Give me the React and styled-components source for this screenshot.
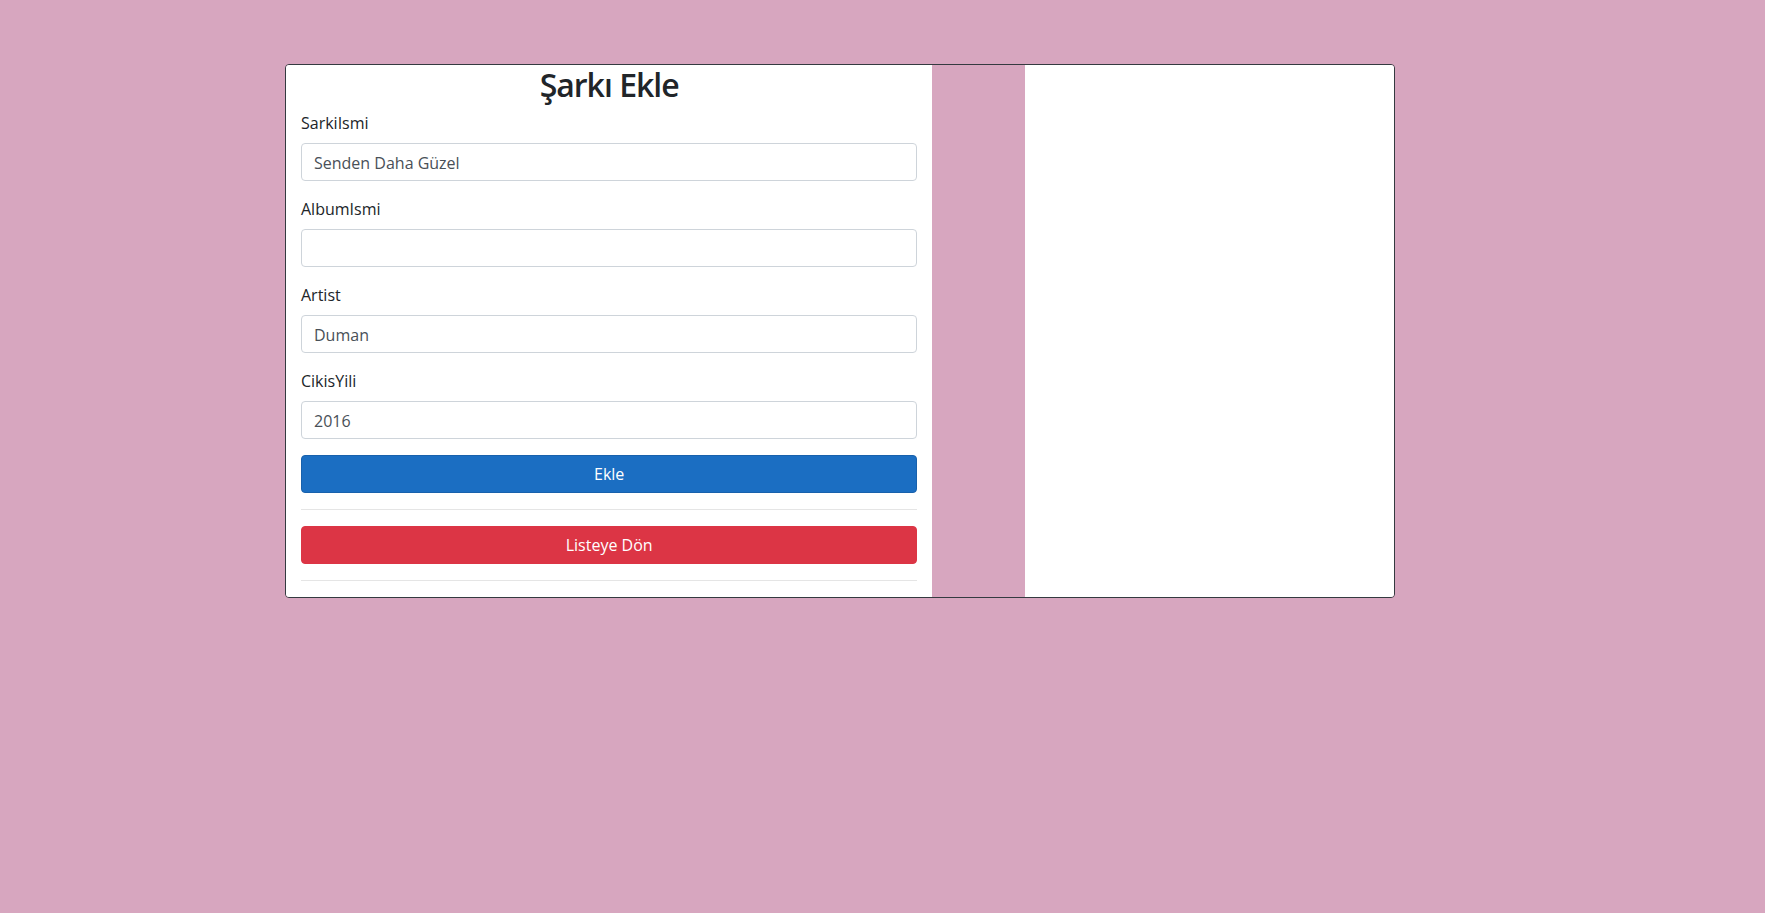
import styled, { createGlobalStyle } from 'styled-components'

const GlobalStyle = createGlobalStyle`
    html, body {
        margin: 0;
        padding: 0;
        background: #d7a6bf;
        min-height: 100vh;
    }

    body {
        font-family: "Open Sans", "Liberation Sans", sans-serif;
        font-size: 16px;
        line-height: 1.5;
        color: #212529;
    }

    * {
        box-sizing: border-box;
    }
`

const Page = styled.div`
    padding: 64px 0 0 285px;
`

const Card = styled.div`
    display: flex;
    width: 1110px;
    border: 1px solid #343a40;
    border-radius: 4px;
    overflow: hidden;
`

// bootstrap-ish 12 column split: 7 / 1 / 4
const Column = styled.div`
    flex: 0 0 ${p => (p.span / 12) * 100}%;
    max-width: ${p => (p.span / 12) * 100}%;
    background: ${p => (p.empty ? 'transparent' : '#fff')};
    padding: 0 15px;
`

const Title = styled.h2`
    margin: 0 0 8px;
    padding-top: 1px;
    font-size: 32px;
    font-weight: 600;
    letter-spacing: -1px;
    line-height: 37.4px;
    text-align: center;
`

const Group = styled.div`
    margin-bottom: 16px;
`

const Label = styled.label`
    display: inline-block;
    margin-bottom: 8px;
`

const Input = styled.input`
    display: block;
    width: 100%;
    height: 38px;
    padding: 7px 12px 5px;
    font: inherit;
    color: #495057;
    background: #fff;
    border: 1px solid #ced4da;
    border-radius: 4px;
    outline: none;
`

const Button = styled.button`
    display: block;
    width: 100%;
    height: 38px;
    padding: 6px 12px;
    font: inherit;
    color: #fff;
    background: ${p => p.bg};
    border: 1px solid ${p => p.border};
    border-radius: 4px;
    cursor: pointer;
`

const Rule = styled.hr`
    margin: 16px 0;
    border: 0;
    border-top: 1px solid rgba(0, 0, 0, 0.1);
`

const fields = [
    { label: 'SarkiIsmi', value: 'Senden Daha Güzel' },
    { label: 'AlbumIsmi', value: '' },
    { label: 'Artist', value: 'Duman' },
    { label: 'CikisYili', value: '2016' },
]

export default function App() {
    return (
        <>
            <GlobalStyle />
            <Page>
                <Card>
                    <Column span={7}>
                        <Title>Şarkı Ekle</Title>
                        {fields.map(f => (
                            <Group key={f.label}>
                                <Label>{f.label}</Label>
                                <Input defaultValue={f.value} />
                            </Group>
                        ))}
                        <Button bg="#1b6ec2" border="#1861ac">Ekle</Button>
                        <Rule />
                        <Button bg="#dc3545" border="#dc3545">Listeye Dön</Button>
                        <Rule />
                    </Column>
                    <Column span={1} empty />
                    <Column span={4} />
                </Card>
            </Page>
        </>
    )
}
